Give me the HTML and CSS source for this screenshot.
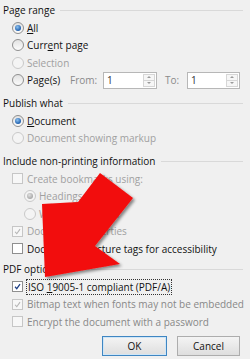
FILE: index.html
```html
<!DOCTYPE html>
<html>
<head>
  <meta charset="UTF-8">
  <title>Publish as PDF options</title>
  <link rel="stylesheet" href="styles.css">
</head>
<body>
  <div class="dialog">

    <!-- Page range -->
    <div class="group-head first"><span>Page range</span></div>
    <div class="row"><span class="radio checked"></span><span><u>A</u>ll</span></div>
    <div class="row"><span class="radio"></span><span>Curr<u>e</u>nt page</span></div>
    <div class="row off"><span class="radio"></span><span>Selection</span></div>
    <div class="row">
      <span class="radio"></span>
      <span class="pages-lbl">Pa<u>g</u>e(s)</span>
      <span class="from-lbl">From:</span>
      <div class="spin">
        <span class="spin-val">1</span>
        <span class="spin-btns"><span class="up"></span><span class="down"></span></span>
      </div>
      <span class="to-lbl">To:</span>
      <div class="spin narrow">
        <span class="spin-val">1</span>
        <span class="spin-btns"><span class="up"></span><span class="down"></span></span>
      </div>
    </div>

    <!-- Publish what -->
    <div class="group-head"><span>Publish what</span></div>
    <div class="row"><span class="radio checked"></span><span><u>D</u>ocument</span></div>
    <div class="row off"><span class="radio"></span><span>Document showing markup</span></div>

    <!-- Include non-printing information -->
    <div class="group-head"><span>Include non-printing information</span></div>
    <div class="row off"><span class="check"></span><span>Create bookmarks using:</span></div>
    <div class="row indent off"><span class="radio checked"></span><span>Headings</span></div>
    <div class="row indent off"><span class="radio"></span><span>Word bookmarks</span></div>
    <div class="row off">
      <span class="check"><svg viewBox="0 0 11 11"><path d="M2.5 5.8 L4.6 8.2 L8.6 2.6"/></svg></span>
      <span>Document properties</span>
    </div>
    <div class="row"><span class="check"></span><span>Document structure tags for accessibility</span></div>

    <!-- PDF options -->
    <div class="group-head tight"><span>PDF options</span></div>
    <div class="row">
      <span class="check on"><svg viewBox="0 0 11 11"><path d="M2.5 5.8 L4.6 8.2 L8.6 2.6"/></svg></span>
      <span class="focus">ISO <u>1</u>9005-1 compliant (PDF/A)</span>
    </div>
    <div class="row dim">
      <span class="check"><svg viewBox="0 0 11 11"><path d="M2.5 5.8 L4.6 8.2 L8.6 2.6"/></svg></span>
      <span>Bitmap text when fonts may not be embedded</span>
    </div>
    <div class="row dim"><span class="check"></span><span>Encrypt the document with a password</span></div>

    <div class="buttons">
      <button class="btn default">OK</button>
      <button class="btn">Cancel</button>
    </div>

    <!-- red callout arrow drawn over the dialog -->
    <svg class="arrow" viewBox="0 0 250 359" width="250" height="359">
      <defs>
        <filter id="shade" x="-20%" y="-20%" width="140%" height="140%">
          <feDropShadow dx="2" dy="2" stdDeviation="1.5" flood-color="#000" flood-opacity="0.45"/>
        </filter>
      </defs>
      <polygon points="100,173 133,198 95,246 120,264 45,277 42,204 78,202" fill="#f20d0d" filter="url(#shade)"/>
    </svg>
  </div>
</body>
</html>
```

FILE: styles.css
```css
body {
  margin: 0;
  background-color: #f0f0f0;
  font-family: "Open Sans", "Liberation Sans", sans-serif;
  font-size: 10px;
  color: #111;
}

.dialog {
  position: relative;
  width: 250px;
  height: 359px;
  box-sizing: border-box;
  padding: 0 7px 0 3px;
  display: flex;
  flex-direction: column;
  overflow: hidden;
}

u {
  text-decoration-thickness: 1px;
  text-underline-offset: 1px;
}

.group-head {
  display: flex;
  align-items: center;
  gap: 5px;
  height: 19px;
  margin-top: 4px;
  white-space: nowrap;
}

.group-head::after {
  content: "";
  flex: 1;
  border-top: 1px solid #d9d9d9;
  margin-top: 1px;
}

.group-head.first {
  margin-top: 0;
}

.group-head.tight {
  margin-top: 1.5px;
}

.row {
  display: flex;
  align-items: center;
  height: 17.5px;
  padding-left: 9px;
  white-space: nowrap;
}

.row.indent {
  padding-left: 21px;
}

.row.off {
  color: #a0a0a0;
}

.row.dim {
  color: #888;
}

/* radio buttons */
.radio {
  position: relative;
  width: 12px;
  height: 12px;
  box-sizing: border-box;
  border-radius: 50%;
  border: 1px solid #8f8f8f;
  background: linear-gradient(#e2e2e2, #fbfbfb);
  margin-right: 3px;
  flex-shrink: 0;
}

.radio.checked::after {
  content: "";
  position: absolute;
  left: 2px;
  top: 2px;
  width: 6px;
  height: 6px;
  border-radius: 50%;
  background: radial-gradient(circle at 40% 35%, #8fc3f0, #1f5fae 70%);
}

.off .radio {
  border-color: #c9c9c9;
  background: #f4f4f4;
}

.off .radio.checked::after {
  background: radial-gradient(circle at 40% 35%, #e0e0e0, #a9a9a9 70%);
}

/* check boxes */
.check {
  width: 11px;
  height: 11px;
  box-sizing: border-box;
  border: 1px solid #8f8f8f;
  background: #fff;
  margin-right: 4px;
  flex-shrink: 0;
  display: flex;
}

.check svg {
  width: 100%;
  height: 100%;
  fill: none;
  stroke: #b4b4b4;
  stroke-width: 1.3;
}

.check.on svg {
  stroke: #1d3f86;
  stroke-width: 1.5;
}

.off .check, .dim .check {
  border-color: #c6c6c6;
  background: #f7f7f7;
}

.focus {
  outline: 1px dotted #333;
  outline-offset: 0;
  padding: 0 1px;
}

/* page(s) row */
.pages-lbl {
  width: 43px;
}

.from-lbl {
  width: 33px;
  color: #8a8a8a;
}

.to-lbl {
  width: 22px;
  margin-left: 8px;
  color: #8a8a8a;
}

.spin {
  display: flex;
  width: 54px;
  height: 17px;
  box-sizing: border-box;
  border: 1px solid #b7b7b7;
  background: #fff;
}

.spin.narrow {
  width: 53px;
}

.spin-val {
  flex: 1;
  padding-left: 3px;
  line-height: 15px;
  color: #333;
}

.spin-btns {
  display: flex;
  flex-direction: column;
  width: 10px;
  margin: 1px;
  border: 1px solid #d6d6d6;
  background: #f6f6f6;
}

.spin-btns span {
  flex: 1;
  display: flex;
  align-items: center;
  justify-content: center;
}

.spin-btns .up {
  border-bottom: 1px solid #d6d6d6;
}

.spin-btns .up::after {
  content: "";
  border-left: 2px solid transparent;
  border-right: 2px solid transparent;
  border-bottom: 2px solid #9a9a9a;
}

.spin-btns .down::after {
  content: "";
  border-left: 2px solid transparent;
  border-right: 2px solid transparent;
  border-top: 2px solid #9a9a9a;
}

/* dialog buttons */
.buttons {
  display: flex;
  justify-content: flex-end;
  gap: 10px;
  margin-top: 5px;
  padding-right: 3px;
}

.btn {
  width: 63px;
  height: 20px;
  padding: 0;
  font-family: inherit;
  font-size: 10px;
  color: #111;
  border: 1px solid #adadad;
  background: linear-gradient(#f4f4f4, #dedede);
}

.btn.default {
  width: 65px;
  border-color: #3f86c2;
  box-shadow: inset 0 0 0 1px #cfe6f7;
}

.arrow {
  position: absolute;
  left: 0;
  top: 0;
  pointer-events: none;
}
```
